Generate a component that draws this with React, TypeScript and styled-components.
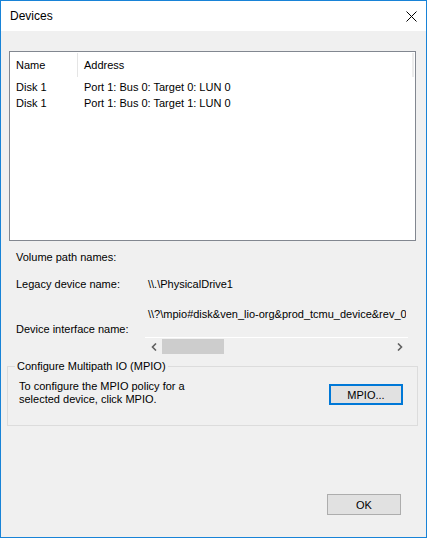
import React from "react";
import styled, { createGlobalStyle } from "styled-components";

const Global = createGlobalStyle`
  html, body { margin: 0; padding: 0; background: #ffffff; }
  body { font-family: "Liberation Sans", Arial, sans-serif; font-size: 11px; color: #000; }
  * { box-sizing: border-box; }
`;

const Window = styled.div`
  width: 427px;
  height: 538px;
  border: 1px solid #1883d7;
  background: #f0f0f0;
  display: flex;
  flex-direction: column;
`;

const TitleBar = styled.div`
  height: 30px;
  background: #ffffff;
  display: flex;
  align-items: center;
  justify-content: space-between;
  padding: 0 9px 0 9px;
  flex-shrink: 0;
`;

const Title = styled.span`
  font-size: 12px;
  line-height: 16px;
`;

const Body = styled.div`
  flex: 1;
  display: flex;
  flex-direction: column;
  padding: 20px 8px 0 6px;
`;

const ListBox = styled.div`
  margin: 0 2px;
  height: 190px;
  border: 1px solid #828790;
  background: #ffffff;
  display: flex;
  flex-direction: column;
`;

const HeaderRow = styled.div`
  height: 25px;
  display: flex;
  align-items: center;
`;

const HeaderCell = styled.div<{ $w?: number; $sep?: boolean }>`
  width: ${(p) => (p.$w ? `${p.$w}px` : "auto")};
  flex: ${(p) => (p.$w ? "none" : "1")};
  height: 24px;
  display: flex;
  align-items: center;
  padding-left: 6px;
  border-right: ${(p) => (p.$sep ? "1px solid #e5e5e5" : "none")};
`;

const HeaderEnd = styled.div`
  width: 2px;
  height: 24px;
  margin-right: 1px;
  background: #ececec;
`;

const Row = styled.div`
  height: 16px;
  display: flex;
  align-items: center;
`;

const Cell = styled.div<{ $w?: number }>`
  width: ${(p) => (p.$w ? `${p.$w}px` : "auto")};
  flex: none;
  padding-left: 6px;
  white-space: nowrap;
`;

const Rows = styled.div`
  padding-top: 2px;
  display: flex;
  flex-direction: column;
`;

const FieldLine = styled.div<{ $mt: number }>`
  display: flex;
  align-items: center;
  height: 16px;
  margin-top: ${(p) => p.$mt}px;
  padding-left: 9px;
`;

const Label = styled.div`
  width: 132px;
  flex: none;
  white-space: nowrap;
`;

const Value = styled.div`
  white-space: nowrap;
`;

const InterfaceBlock = styled.div`
  display: flex;
  margin-top: 14px;
  padding-left: 9px;
`;

const InterfaceLabel = styled.div`
  width: 129px;
  flex: none;
  white-space: nowrap;
  padding-top: 15px;
  line-height: 16px;
`;

const InterfaceValue = styled.div`
  width: 263px;
  display: flex;
  flex-direction: column;
`;

const ClippedText = styled.div`
  width: 261px;
  overflow: hidden;
  white-space: nowrap;
  padding-left: 3px;
  height: 16px;
  line-height: 16px;
`;

const ScrollBar = styled.div`
  margin-top: 15px;
  height: 18px;
  border-top: 1px solid #ffffff;
  display: flex;
  align-items: center;
`;

const ScrollArrow = styled.div`
  width: 17px;
  height: 17px;
  display: flex;
  align-items: center;
  justify-content: center;
  flex: none;
`;

const Track = styled.div`
  flex: 1;
  height: 17px;
  display: flex;
  align-items: center;
`;

const Thumb = styled.div`
  width: 62px;
  height: 15px;
  background: #cdcdcd;
`;

const GroupBox = styled.fieldset`
  margin: 4px 0 0 0;
  padding: 0;
  height: 67px;
  border: 1px solid #dcdcdc;
  display: flex;
  align-items: flex-start;
  justify-content: space-between;
  min-width: 0;
`;

const Legend = styled.legend`
  padding: 0 2px;
  margin-left: 7px;
  font-size: 11px;
  line-height: 14px;
`;

const GroupText = styled.div`
  margin: 7px 0 0 11px;
  line-height: 13px;
`;

const Button = styled.button<{ $focused?: boolean }>`
  width: 74px;
  height: 21px;
  background: #e1e1e1;
  border: ${(p) => (p.$focused ? "2px solid #0078d7" : "1px solid #adadad")};
  font-family: inherit;
  font-size: 11px;
  color: #000;
  padding: 0;
  display: flex;
  align-items: center;
  justify-content: center;
`;

const GroupButton = styled(Button)`
  margin: 11px 14px 0 0;
`;

const Footer = styled.div`
  margin-top: auto;
  display: flex;
  justify-content: flex-end;
  padding: 0 17px 22px 0;
`;

const CloseIcon = () => (
  <svg width="11" height="11" viewBox="0 0 11 11">
    <path d="M0.5 0.5 L10.5 10.5 M10.5 0.5 L0.5 10.5" stroke="#000" strokeWidth="1" />
  </svg>
);

const Chevron = ({ dir }: { dir: "l" | "r" }) => (
  <svg width="6" height="8" viewBox="0 0 6 8">
    <path
      d={dir === "l" ? "M5 0.5 L1.5 4 L5 7.5" : "M1 0.5 L4.5 4 L1 7.5"}
      stroke="#606060"
      strokeWidth="1.6"
      fill="none"
    />
  </svg>
);

export default function App() {
  return (
    <>
      <Global />
      <Window>
        <TitleBar>
          <Title>Devices</Title>
          <CloseIcon />
        </TitleBar>
        <Body>
          <ListBox>
            <HeaderRow>
              <HeaderCell $w={68} $sep>Name</HeaderCell>
              <HeaderCell>Address</HeaderCell>
              <HeaderEnd />
            </HeaderRow>
            <Rows>
              <Row>
                <Cell $w={68}>Disk 1</Cell>
                <Cell>Port 1: Bus 0: Target 0: LUN 0</Cell>
              </Row>
              <Row>
                <Cell $w={68}>Disk 1</Cell>
                <Cell>Port 1: Bus 0: Target 1: LUN 0</Cell>
              </Row>
            </Rows>
          </ListBox>
          <FieldLine $mt={8}>
            <Label>Volume path names:</Label>
          </FieldLine>
          <FieldLine $mt={11}>
            <Label>Legacy device name:</Label>
            <Value>\\.\PhysicalDrive1</Value>
          </FieldLine>
          <InterfaceBlock>
            <InterfaceLabel>Device interface name:</InterfaceLabel>
            <InterfaceValue>
              <ClippedText>\\?\mpio#disk&amp;ven_lio-org&amp;prod_tcmu_device&amp;rev_0002#1&amp;7f6ac24&amp;0&amp;3</ClippedText>
              <ScrollBar>
                <ScrollArrow><Chevron dir="l" /></ScrollArrow>
                <Track><Thumb /></Track>
                <ScrollArrow><Chevron dir="r" /></ScrollArrow>
              </ScrollBar>
            </InterfaceValue>
          </InterfaceBlock>
          <GroupBox>
            <Legend>Configure Multipath IO (MPIO)</Legend>
            <GroupText>
              To configure the MPIO policy for a
              <br />
              selected device, click MPIO.
            </GroupText>
            <GroupButton $focused>MPIO...</GroupButton>
          </GroupBox>
          <Footer>
            <Button>OK</Button>
          </Footer>
        </Body>
      </Window>
    </>
  );
}
